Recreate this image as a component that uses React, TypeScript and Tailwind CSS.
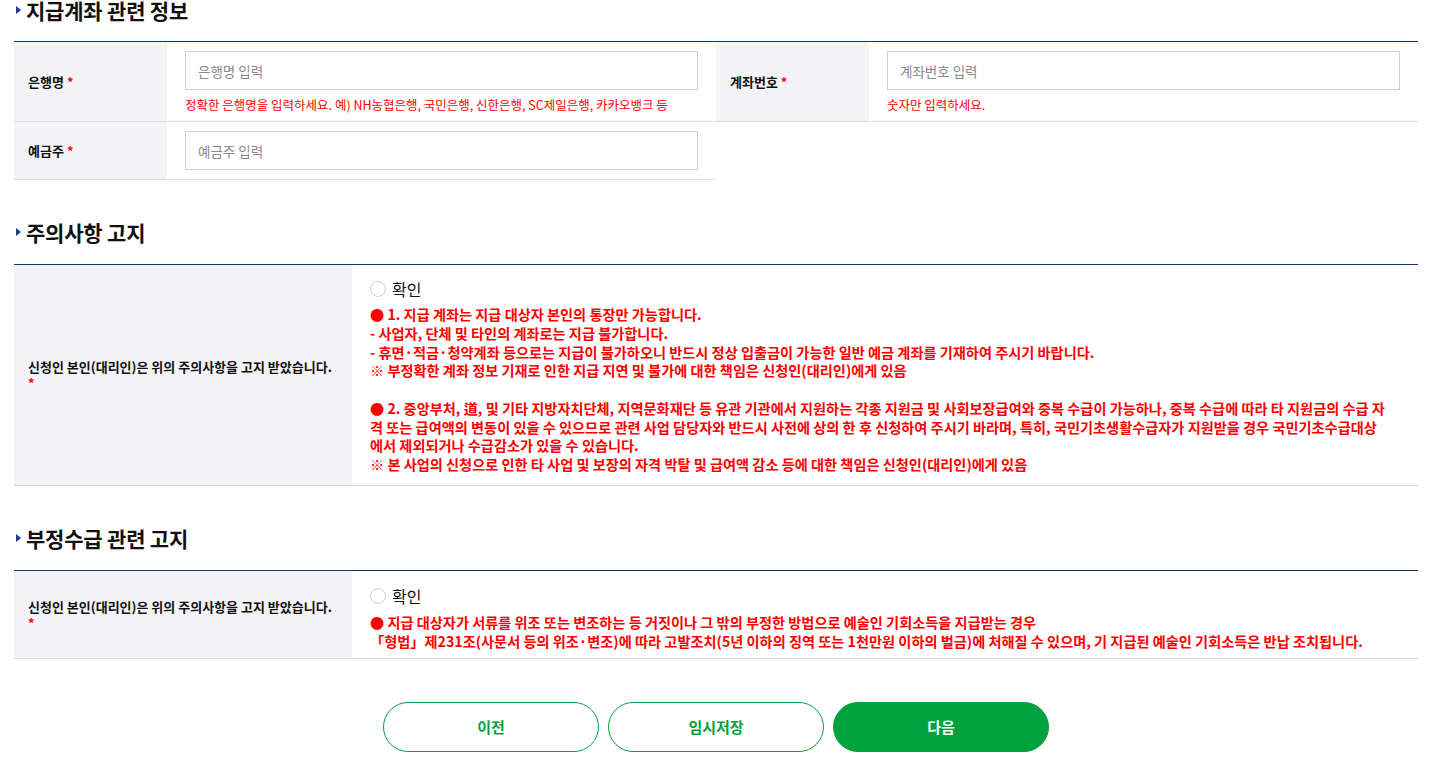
import React from "react"

function SectionTitle({ children, className = "" }: { children: React.ReactNode; className?: string }) {
  return (
    <h2 className={`flex h-[30px] items-center text-[21px] font-bold leading-[30px] tracking-[-0.2px] text-[#111] ${className}`}>
      <span className="ml-[2px] mr-[5px] h-0 w-0 border-y-[4px] border-l-[5px] border-y-transparent border-l-[#1d3c8f]" />
      {children}
    </h2>
  )
}

function Req() {
  return <span className="ml-[3px] text-[#ff0000]">*</span>
}

function Label({ children, wide = false }: { children: React.ReactNode; wide?: boolean }) {
  return (
    <div
      className={`flex items-center bg-[#f4f4f6] px-[14px] text-[13px] font-bold leading-[15px] text-[#111] ${
        wide ? "w-[338px] shrink-0" : ""
      }`}
    >
      <div>{children}</div>
    </div>
  )
}

function TextInput({ placeholder }: { placeholder: string }) {
  return (
    <input
      type="text"
      placeholder={placeholder}
      className="block h-[39px] w-full border border-[#d0d0d0] bg-white px-[12px] text-[13.5px] text-[#333] outline-none placeholder:text-[#888]"
    />
  )
}

function Help({ children }: { children: React.ReactNode }) {
  return <p className="mt-[6px] text-[12.5px] leading-[17px] text-[#ff0000]">{children}</p>
}

function Radio() {
  return (
    <label className="flex h-[24px] items-center gap-[6px] text-[16px] text-[#111]">
      <span className="block h-[16px] w-[16px] rounded-full border border-[#cfcfcf] bg-white" />
      확인
    </label>
  )
}

export default function App() {
  return (
    <div className="min-h-[762px] bg-white font-['Noto_Sans_CJK_KR','Noto_Sans',sans-serif]">
      <div className="ml-[14px] w-[1404px]">
        <SectionTitle className="-mt-[5px]">지급계좌 관련 정보</SectionTitle>

        <div className="mt-[16px] border-t border-[#15366b]">
          <div className="grid grid-cols-[153px_549px_153px_549px] border-b border-[#dcdcdc]">
            <Label>
              은행명
              <Req />
            </Label>
            <div className="px-[18px] pb-[8px] pt-[9px]">
              <TextInput placeholder="은행명 입력" />
              <Help>정확한 은행명을 입력하세요. 예) NH농협은행, 국민은행, 신한은행, SC제일은행, 카카오뱅크 등</Help>
            </div>
            <Label>
              계좌번호
              <Req />
            </Label>
            <div className="px-[18px] pb-[8px] pt-[9px]">
              <TextInput placeholder="계좌번호 입력" />
              <Help>숫자만 입력하세요.</Help>
            </div>
          </div>
          <div className="grid w-[702px] grid-cols-[153px_549px] border-b border-[#dcdcdc]">
            <Label>
              예금주
              <Req />
            </Label>
            <div className="px-[18px] py-[9px]">
              <TextInput placeholder="예금주 입력" />
            </div>
          </div>
        </div>

        <SectionTitle className="mt-[37px]">주의사항 고지</SectionTitle>

        <div className="mt-[17px] flex border-y border-t-[#15366b] border-b-[#dcdcdc]">
          <Label wide>
            신청인 본인(대리인)은 위의 주의사항을 고지 받았습니다.
            <span className="mt-[1px] block text-[#ff0000]">*</span>
          </Label>
          <div className="min-w-0 flex-1 px-[18px] pb-[11px] pt-[12px]">
            <Radio />
            <div className="mt-[4px] text-[14.2px] font-bold leading-[18.75px] text-[#ff0000]">
              <p>● 1. 지급 계좌는 지급 대상자 본인의 통장만 가능합니다.</p>
              <p>- 사업자, 단체 및 타인의 계좌로는 지급 불가합니다.</p>
              <p>- 휴면·적금·청약계좌 등으로는 지급이 불가하오니 반드시 정상 입출금이 가능한 일반 예금 계좌를 기재하여 주시기 바랍니다.</p>
              <p>※ 부정확한 계좌 정보 기재로 인한 지급 지연 및 불가에 대한 책임은 신청인(대리인)에게 있음</p>
              <p>&nbsp;</p>
              <p className="whitespace-nowrap">
                ● 2. 중앙부처, 道, 및 기타 지방자치단체, 지역문화재단 등 유관 기관에서 지원하는 각종 지원금 및 사회보장급여와 중복 수급이 가능하나, 중복 수급에 따라 타 지원금의 수급 자
                <br />
                격 또는 급여액의 변동이 있을 수 있으므로 관련 사업 담당자와 반드시 사전에 상의 한 후 신청하여 주시기 바라며, 특히, 국민기초생활수급자가 지원받을 경우 국민기초수급대상
                <br />
                에서 제외되거나 수급감소가 있을 수 있습니다.
              </p>
              <p>※ 본 사업의 신청으로 인한 타 사업 및 보장의 자격 박탈 및 급여액 감소 등에 대한 책임은 신청인(대리인)에게 있음</p>
            </div>
          </div>
        </div>

        <SectionTitle className="mt-[37px]">부정수급 관련 고지</SectionTitle>

        <div className="mt-[17px] flex border-y border-t-[#15366b] border-b-[#dcdcdc]">
          <Label wide>
            신청인 본인(대리인)은 위의 주의사항을 고지 받았습니다.
            <span className="mt-[1px] block text-[#ff0000]">*</span>
          </Label>
          <div className="min-w-0 flex-1 px-[18px] pb-[8px] pt-[13px]">
            <Radio />
            <div className="mt-[5px] text-[14.2px] font-bold leading-[18.75px] text-[#ff0000]">
              <p>● 지급 대상자가 서류를 위조 또는 변조하는 등 거짓이나 그 밖의 부정한 방법으로 예술인 기회소득을 지급받는 경우</p>
              <p>「형법」제231조(사문서 등의 위조·변조)에 따라 고발조치(5년 이하의 징역 또는 1천만원 이하의 벌금)에 처해질 수 있으며, 기 지급된 예술인 기회소득은 반납 조치됩니다.</p>
            </div>
          </div>
        </div>

        <div className="mt-[43px] flex justify-center gap-[9px]">
          <button className="h-[50px] w-[216px] rounded-full border border-[#00a23f] bg-white text-[15px] font-bold text-[#00a23f]">
            이전
          </button>
          <button className="h-[50px] w-[216px] rounded-full border border-[#00a23f] bg-white text-[15px] font-bold text-[#00a23f]">
            임시저장
          </button>
          <button className="h-[50px] w-[216px] rounded-full border border-[#00a23f] bg-[#00a23f] text-[15px] font-bold text-white">
            다음
          </button>
        </div>
      </div>
    </div>
  )
}
